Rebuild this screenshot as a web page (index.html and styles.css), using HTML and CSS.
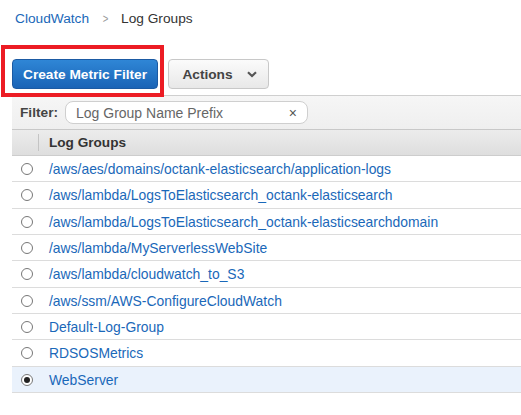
FILE: index.html
```html
<!DOCTYPE html>
<html>
<head>
<meta charset="utf-8">
<link rel="stylesheet" href="styles.css">
</head>
<body>
<div class="page">
  <nav class="crumbs">
    <a class="crumb-link">CloudWatch</a>
    <span class="crumb-sep">&gt;</span>
    <span class="crumb-cur">Log Groups</span>
  </nav>
  <div class="toolbar">
    <div class="highlight"></div>
    <button class="btn btn-primary">Create Metric Filter</button>
    <button class="btn btn-default">Actions
      <svg class="caret" width="10" height="7" viewBox="0 0 10 7"><path d="M1 1.2 L5 5 L9 1.2" fill="none" stroke="#555" stroke-width="2.2"/></svg>
    </button>
  </div>
  <div class="panel">
    <div class="filter-bar">
      <span class="filter-label">Filter:</span>
      <div class="filter-input">
        <span class="placeholder">Log Group Name Prefix</span>
        <span class="clear">×</span>
      </div>
    </div>
    <div class="table-head">
      <div class="col-radio"></div>
      <div class="col-name">Log Groups</div>
    </div>
    <div class="row"><span class="radio"></span><a class="link">/aws/aes/domains/octank-elasticsearch/application-logs</a></div>
    <div class="row"><span class="radio"></span><a class="link">/aws/lambda/LogsToElasticsearch_octank-elasticsearch</a></div>
    <div class="row"><span class="radio"></span><a class="link">/aws/lambda/LogsToElasticsearch_octank-elasticsearchdomain</a></div>
    <div class="row"><span class="radio"></span><a class="link">/aws/lambda/MyServerlessWebSite</a></div>
    <div class="row"><span class="radio"></span><a class="link">/aws/lambda/cloudwatch_to_S3</a></div>
    <div class="row"><span class="radio"></span><a class="link">/aws/ssm/AWS-ConfigureCloudWatch</a></div>
    <div class="row"><span class="radio"></span><a class="link">Default-Log-Group</a></div>
    <div class="row"><span class="radio"></span><a class="link">RDSOSMetrics</a></div>
    <div class="row selected"><span class="radio checked"></span><a class="link">WebServer</a></div>
  </div>
</div>
</body>
</html>
```
FILE: styles.css
```css
html, body {
  margin: 0;
  padding: 0;
  background: #fff;
}
.page {
  width: 521px;
  height: 415px;
  overflow: hidden;
  font-family: "Liberation Sans", Arial, sans-serif;
  color: #333;
}
.crumbs {
  display: flex;
  align-items: center;
  height: 16px;
  padding: 11px 0 0 15px;
  font-size: 13.7px;
  line-height: 16px;
}
.crumb-link {
  color: #1a68b9;
}
.crumb-sep {
  color: #999;
  font-size: 12px;
  margin: 0 12px 0 13px;
  transform: scaleX(0.8);
}
.crumb-cur {
  color: #333;
}
.toolbar {
  position: relative;
  display: flex;
  gap: 10px;
  padding: 32px 0 0 12px;
  height: 30px;
}
.highlight {
  position: absolute;
  left: 1px;
  top: 18px;
  width: 155px;
  height: 44px;
  border: 4px solid #ec1c24;
}
.btn {
  box-sizing: border-box;
  height: 30px;
  border-radius: 4px;
  font-family: "Liberation Sans", Arial, sans-serif;
  font-weight: bold;
  font-size: 13.7px;
  padding: 0;
  display: flex;
  align-items: center;
  justify-content: center;
}
.btn-primary {
  width: 146px;
  color: #fff;
  border: 1px solid #1b5aa3;
  background: linear-gradient(#2f86d6, #1a64b6);
}
.btn-default {
  width: 101px;
  color: #444;
  border: 1px solid #c8c8c8;
  background: linear-gradient(#fbfbfb, #e8e8e8);
  gap: 14px;
  padding-left: 2px;
}
.caret {
  display: block;
}
.panel {
  margin: 6px 0 0 12px;
  border-top: 1px solid #cfcfcf;
}
.filter-bar {
  box-sizing: border-box;
  height: 34px;
  display: flex;
  align-items: center;
  padding-left: 8px;
  background: linear-gradient(#f6f6f6, #efefef);
  border-bottom: 1px solid #c8c8c8;
}
.filter-label {
  font-weight: bold;
  font-size: 13.7px;
  color: #444;
  width: 45px;
}
.filter-input {
  box-sizing: border-box;
  width: 243px;
  height: 23px;
  background: #fff;
  border: 1px solid #cfcfcf;
  border-radius: 8px;
  display: flex;
  align-items: center;
  justify-content: space-between;
  padding: 0 10px 0 10px;
  font-size: 14px;
}
.placeholder {
  color: #666;
}
.clear {
  color: #555;
  font-size: 14px;
}
.table-head {
  box-sizing: border-box;
  height: 26px;
  display: flex;
  align-items: center;
  background: linear-gradient(#ececec, #dedede);
  border-bottom: 1px solid #cdcdcd;
}
.col-radio {
  width: 26px;
  height: 17px;
  border-right: 1px solid #c4c4c4;
}
.col-name {
  padding-left: 10px;
  font-weight: bold;
  font-size: 13.6px;
  color: #333;
}
.row {
  box-sizing: border-box;
  height: 26.33px;
  display: flex;
  align-items: center;
  border-bottom: 1px solid #dcdcdc;
  font-size: 13.9px;
  padding-top: 1px;
}
.row.selected {
  background: #eaf2fc;
}
.radio {
  box-sizing: border-box;
  width: 12px;
  height: 12px;
  border: 1px solid #777;
  border-radius: 50%;
  background: #fff;
  margin: 0 16px 0 9px;
  display: flex;
  align-items: center;
  justify-content: center;
}
.radio.checked::after {
  content: "";
  width: 6px;
  height: 6px;
  border-radius: 50%;
  background: #222;
}
.link {
  color: #1a68b9;
  white-space: nowrap;
}
```
